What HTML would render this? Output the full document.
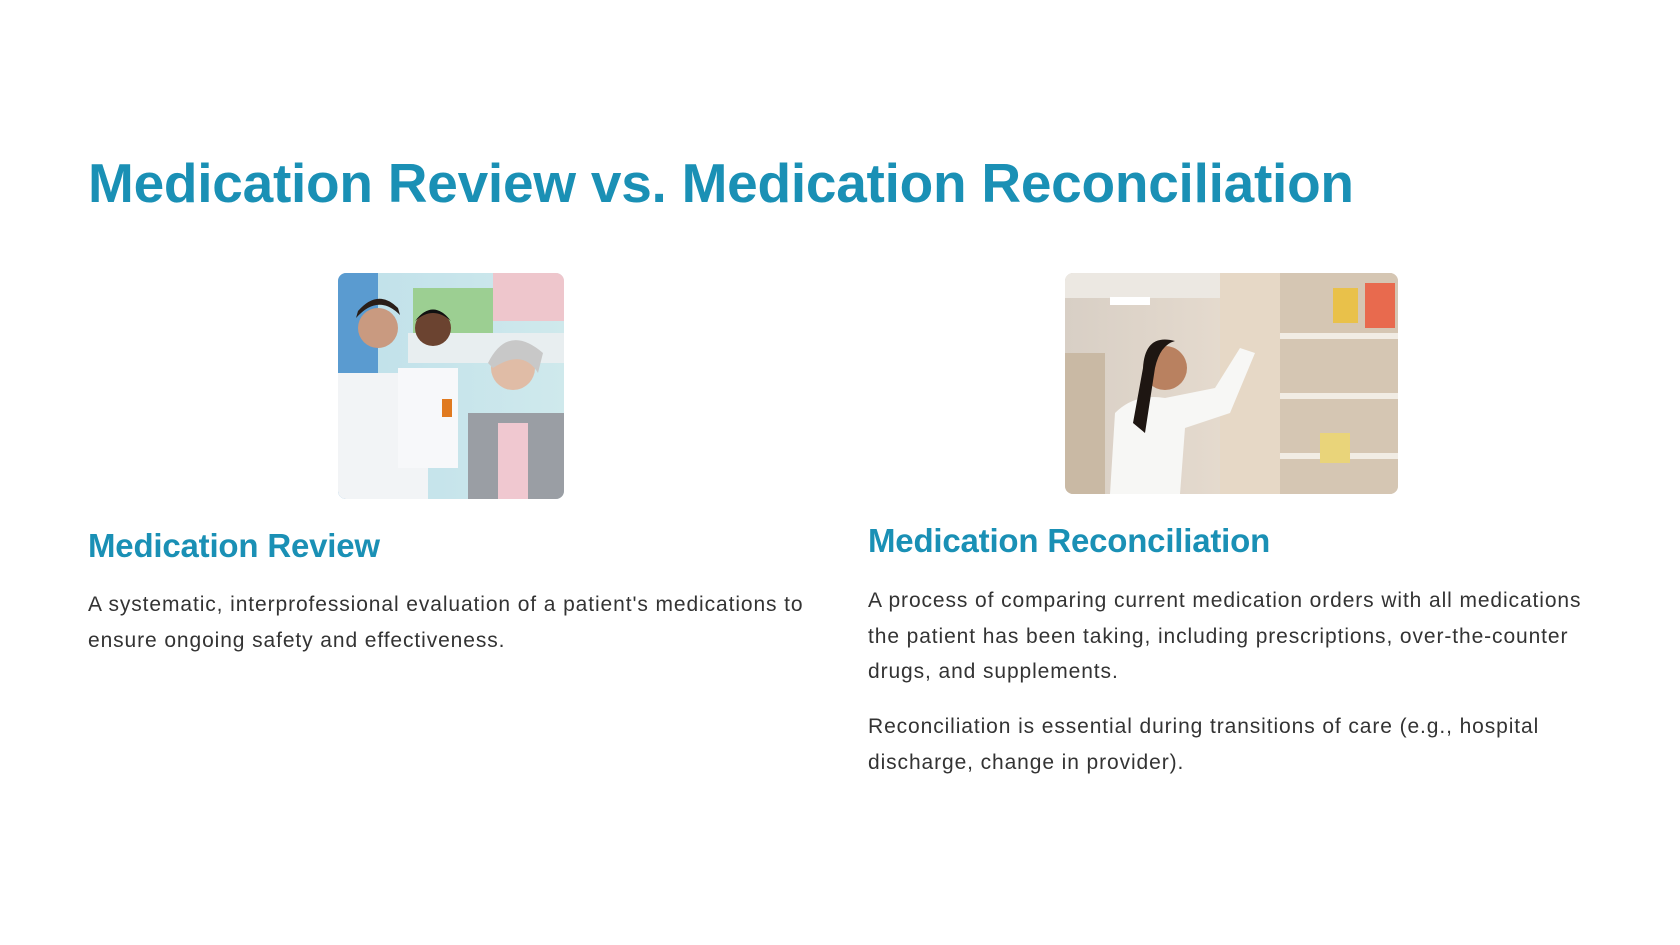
<!DOCTYPE html>
<html><head><meta charset="utf-8"><style>
*{margin:0;padding:0;box-sizing:border-box}
body{width:1680px;height:945px;background:#fff;font-family:"Liberation Sans",sans-serif;position:relative;overflow:hidden}
h1{position:absolute;left:88px;top:148px;font-size:55px;font-weight:bold;color:#1a90b5;white-space:nowrap;letter-spacing:-0.25px;line-height:70px}
h2{position:absolute;font-size:33px;font-weight:bold;color:#1a90b5;white-space:nowrap;letter-spacing:-0.2px;line-height:40px}
p{position:absolute;font-size:21px;color:#333;line-height:35.5px;letter-spacing:0.9px;white-space:nowrap}
.img{position:absolute;border-radius:8px;overflow:hidden}
</style></head><body>
<h1>Medication Review vs. Medication Reconciliation</h1>

<div class="img" style="left:338px;top:273px;width:226px;height:226px;background:linear-gradient(90deg,#bfe0ea,#cfe9ec)">
<svg width="226" height="226" viewBox="0 0 226 226">
<rect x="0" y="0" width="40" height="226" fill="#5a9bd0"/>
<rect x="75" y="15" width="80" height="50" fill="#9ccf92"/>
<rect x="155" y="0" width="71" height="48" fill="#eec6cc"/>
<rect x="70" y="60" width="156" height="30" fill="#e8eef0"/>
<rect x="0" y="100" width="90" height="126" fill="#f2f4f6"/>
<circle cx="40" cy="55" r="20" fill="#c99a80"/>
<path d="M18 45 Q40 20 62 42 L60 35 Q40 15 20 38Z" fill="#2a1e18"/>
<rect x="60" y="95" width="60" height="100" fill="#f7f8fa"/>
<circle cx="95" cy="55" r="18" fill="#6b4330"/>
<path d="M77 48 Q95 25 113 48 Q95 32 77 48Z" fill="#111"/>
<rect x="130" y="140" width="96" height="86" fill="#9a9ea4"/>
<circle cx="175" cy="95" r="22" fill="#e0bca6"/>
<path d="M150 90 Q170 50 205 80 L200 100 Q185 75 155 95Z" fill="#c8c8c8"/>
<rect x="160" y="150" width="30" height="76" fill="#f0c8d0"/>
<rect x="104" y="126" width="10" height="18" fill="#e07a20"/>
</svg></div>

<div class="img" style="left:1065px;top:273px;width:333px;height:221px;background:linear-gradient(90deg,#d8cfc5,#e8ddd0 60%,#d9cfc3)">
<svg width="333" height="221" viewBox="0 0 333 221">
<rect x="0" y="0" width="160" height="25" fill="#ece8e2"/>
<rect x="45" y="24" width="40" height="8" fill="#fff"/>
<rect x="0" y="80" width="40" height="141" fill="#c9b9a4"/>
<rect x="155" y="0" width="60" height="221" fill="#e6d8c6"/>
<rect x="215" y="0" width="118" height="221" fill="#d5c6b3"/>
<g fill="#f1ece4"><rect x="215" y="60" width="118" height="6"/><rect x="215" y="120" width="118" height="6"/><rect x="215" y="180" width="118" height="6"/></g>
<rect x="268" y="15" width="25" height="35" fill="#e9c14a"/>
<rect x="300" y="10" width="30" height="45" fill="#e86a4e"/>
<rect x="255" y="160" width="30" height="30" fill="#e9d47a"/>
<path d="M45 221 L50 140 Q70 120 100 125 L150 115 L175 75 L190 80 L165 140 L120 155 L115 221Z" fill="#f7f7f5"/>
<circle cx="100" cy="95" r="22" fill="#b98160"/>
<path d="M78 95 Q80 60 110 68 Q95 72 90 95 L80 160 L68 150Z" fill="#1e1612"/>
</svg></div>

<h2 style="left:88px;top:526px">Medication Review</h2>
<p style="left:88px;top:587px">A systematic, interprofessional evaluation of a patient's medications to<br>ensure ongoing safety and effectiveness.</p>

<h2 style="left:868px;top:521px">Medication Reconciliation</h2>
<p style="left:868px;top:583px">A process of comparing current medication orders with all medications<br>the patient has been taking, including prescriptions, over-the-counter<br>drugs, and supplements.</p>
<p style="left:868px;top:709px">Reconciliation is essential during transitions of care (e.g., hospital<br>discharge, change in provider).</p>
</body></html>
